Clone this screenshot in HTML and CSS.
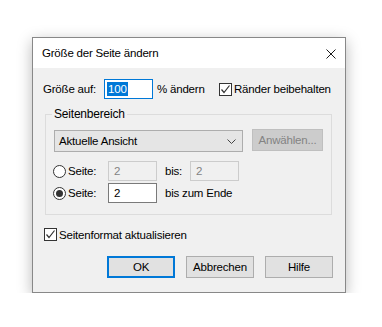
FILE: index.html
```html
<!DOCTYPE html>
<html lang="de">
<head>
    <meta charset="UTF-8">
    <title>Größe der Seite ändern</title>
    <link rel="stylesheet" href="styles.css">
</head>
<body>
    <div class="dialog">
        <div class="titlebar">
            <span class="title">Größe der Seite ändern</span>
            <svg class="close" width="10" height="10" viewBox="0 0 10 10">
                <path d="M0.5 0.5 L9.5 9.5 M9.5 0.5 L0.5 9.5" stroke="#1a1a1a" stroke-width="1" fill="none"/>
            </svg>
        </div>
        <div class="content">
            <div class="size-row">
                <span class="lbl-size">Größe auf:</span>
                <span class="field focused"><span class="selected">100</span></span>
                <span class="lbl-pct">% ändern</span>
                <span class="check">
                    <span class="box">
                        <svg width="11" height="11" viewBox="0 0 11 11"><path d="M1.5 5.5 L4 8.5 L9.5 1.5" stroke="#333" stroke-width="1.2" fill="none"/></svg>
                    </span>
                    Ränder beibehalten
                </span>
            </div>

            <fieldset class="group">
                <legend>Seitenbereich</legend>
                <div class="combo-row">
                    <div class="combo">
                        <span>Aktuelle Ansicht</span>
                        <svg width="9" height="5" viewBox="0 0 9 5"><path d="M0.5 0.5 L4.5 4.5 L8.5 0.5" stroke="#444" stroke-width="1" fill="none"/></svg>
                    </div>
                    <span class="btn disabled">Anwählen...</span>
                </div>
                <div class="radio-row">
                    <span class="radio"></span>
                    <span class="lbl-seite">Seite:</span>
                    <span class="field disabled">2</span>
                    <span class="lbl-bis">bis:</span>
                    <span class="field disabled">2</span>
                </div>
                <div class="radio-row">
                    <span class="radio on"></span>
                    <span class="lbl-seite">Seite:</span>
                    <span class="field">2</span>
                    <span class="lbl-bis">bis zum Ende</span>
                </div>
            </fieldset>

            <div class="check format">
                <span class="box">
                    <svg width="11" height="11" viewBox="0 0 11 11"><path d="M1.5 5.5 L4 8.5 L9.5 1.5" stroke="#333" stroke-width="1.2" fill="none"/></svg>
                </span>
                Seitenformat aktualisieren
            </div>

            <div class="buttons">
                <span class="btn default">OK</span>
                <span class="btn">Abbrechen</span>
                <span class="btn">Hilfe</span>
            </div>
        </div>
    </div>
</body>
</html>
```

FILE: styles.css
```css
body {
    margin: 0;
    padding: 37px 0 0 32px;
    background: #ffffff;
    font-family: "Liberation Sans", Arial, sans-serif;
    font-size: 11.5px;
    letter-spacing: -0.2px;
    color: #000;
}
.dialog {
    width: 312px;
    height: 254px;
    border: 1px solid #888888;
    background: #f0f0f0;
    box-shadow: 0 4px 14px rgba(0,0,0,0.28);
    white-space: nowrap;
}
.titlebar {
    height: 30px;
    background: #ffffff;
    display: flex;
    align-items: center;
    justify-content: space-between;
    padding: 0 9px 0 9px;
}
.title {
    font-size: 11.5px;
}
.close {
    display: block;
    margin-top: 1px;
}
.content {
    padding: 11px 11px 0 10px;
}
.size-row {
    display: flex;
    align-items: center;
    height: 20px;
}
.size-row > *,
.radio-row > *,
.combo-row > * {
    flex: none;
}
.lbl-size {
    width: 61px;
}
.field {
    box-sizing: border-box;
    width: 49px;
    height: 20px;
    border: 1px solid #7a7a7a;
    background: #fff;
    padding: 0 0 0 5px;
    line-height: 18px;
}
.field.focused {
    border-color: #0078d7;
    padding-left: 2px;
}
.selected {
    background: #0078d7;
    color: #fff;
    padding: 1px 1px;
}
.field.disabled {
    border-color: #cccccc;
    background: #f0f0f0;
    color: #838383;
}
.lbl-pct {
    margin-left: 4px;
    width: 62px;
}
.check {
    display: flex;
    align-items: center;
}
.box {
    box-sizing: border-box;
    width: 13px;
    height: 13px;
    border: 1px solid #333;
    background: #fff;
    margin-right: 2px;
    display: flex;
    align-items: center;
    justify-content: center;
}
.box svg {
    display: block;
}
.group {
    margin: 8px 0 0 2px;
    width: 287px;
    box-sizing: border-box;
    height: 108px;
    border: 1px solid #dcdcdc;
    padding: 0 0 0 8px;
}
.group legend {
    margin-left: -2px;
    padding: 0 2px;
    line-height: 15px;
    font-size: 12px;
}
.combo-row {
    display: flex;
    align-items: flex-start;
    margin-top: 8px;
}
.combo {
    box-sizing: border-box;
    width: 189px;
    height: 22px;
    border: 1px solid #adadad;
    background: #e5e5e5;
    display: flex;
    align-items: center;
    justify-content: space-between;
    padding: 0 6px 0 4px;
}
.combo svg {
    display: block;
}
.btn {
    box-sizing: border-box;
    width: 68px;
    height: 22px;
    border: 1px solid #adadad;
    background: #e1e1e1;
    display: flex;
    align-items: center;
    justify-content: center;
}
.btn.disabled {
    margin: -1px 0 0 9px;
    width: 71px;
    background: #cccccc;
    border-color: #bfbfbf;
    color: #838383;
}
.btn.default {
    border: 2px solid #0078d7;
}
.radio-row {
    display: flex;
    align-items: center;
    height: 20px;
    margin-top: 2px;
}
.combo-row + .radio-row {
    margin-top: 9px;
}
.radio {
    box-sizing: border-box;
    width: 13px;
    height: 13px;
    border: 1px solid #333;
    border-radius: 50%;
    background: #fff;
    margin: 0 2px 0 -1px;
    display: flex;
    align-items: center;
    justify-content: center;
}
.radio.on::after {
    content: "";
    width: 7px;
    height: 7px;
    border-radius: 50%;
    background: #333;
}
.lbl-seite {
    width: 40px;
}
.lbl-bis {
    margin: 0 0 0 8px;
    min-width: 25px;
}
.format {
    margin: 13px 0 0 1px;
}
.buttons {
    display: flex;
    justify-content: flex-end;
    gap: 11px;
    margin: 15px 1px 0 0;
}
```
